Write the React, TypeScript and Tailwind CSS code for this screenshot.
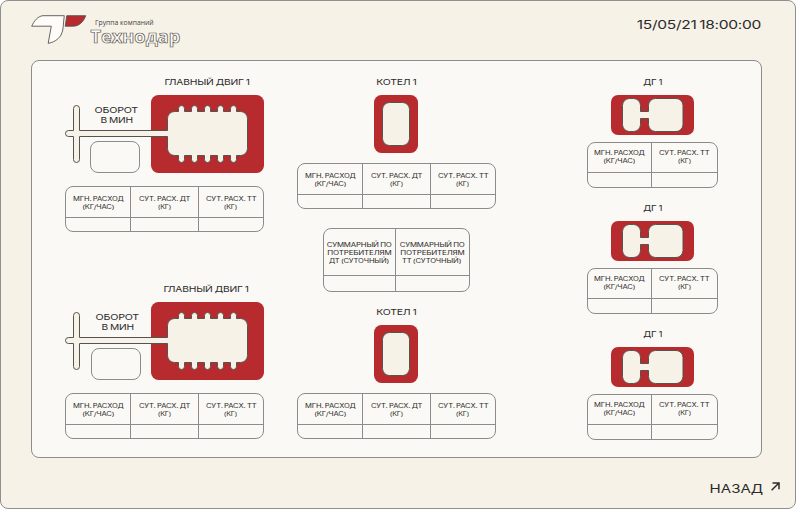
import { useLayoutEffect, useRef, useState } from "react";
import clsx from "clsx";

/** One line of extended-width lettering, stretched to the given width. */
function Wide({ w, className, children }: { w: number; className?: string; children: string }) {
  const ref = useRef<HTMLSpanElement>(null);
  const [scale, setScale] = useState(1);
  useLayoutEffect(() => {
    if (ref.current) setScale(w / ref.current.offsetWidth);
  }, [w, children]);
  return (
    <span className={clsx("flex justify-center", className)} style={{ width: w }}>
      <span ref={ref} className="shrink-0 whitespace-nowrap" style={{ transform: `scaleX(${scale})` }}>
        {children}
      </span>
    </span>
  );
}

type Line = [string, number];

const FLOW: Line[] = [["МГН. РАСХОД", 51], ["(КГ/ЧАС)", 31.5]];
const DAY_DT: Line[] = [["СУТ. РАСХ. ДТ", 51], ["(КГ)", 13.5]];
const DAY_TT: Line[] = [["СУТ. РАСХ. ТТ", 50], ["(КГ)", 13.5]];
const SUM_DT: Line[] = [["СУММАРНЫЙ ПО", 64.5], ["ПОТРЕБИТЕЛЯМ", 64.5], ["ДТ (СУТОЧНЫЙ)", 60]];
const SUM_TT: Line[] = [["СУММАРНЫЙ ПО", 64.5], ["ПОТРЕБИТЕЛЯМ", 64.5], ["ТТ (СУТОЧНЫЙ)", 59]];

function Table({ cells, className, head }: { cells: Line[][]; className: string; head: string }) {
  return (
    <div className={clsx("grid shrink-0 overflow-hidden rounded-lg border border-[#8c8c8c]", className)}>
      {cells.map((lines, i) => (
        <div key={i} className={clsx("flex flex-col", i > 0 && "border-l border-[#8c8c8c]")}>
          <div
            className={clsx(
              "flex flex-col items-center border-b border-[#8c8c8c] text-[5.8px] leading-[8px] tracking-[-0.02em] [word-spacing:-0.08em]",
              head,
            )}
          >
            {lines.map(([text, w]) => (
              <Wide key={text} w={w}>
                {text}
              </Wide>
            ))}
          </div>
        </div>
      ))}
    </div>
  );
}

function Title({ w, children }: { w: number; children: string }) {
  return (
    <h2 className="mb-[3px] flex h-5 items-center justify-center text-[8px] tracking-[-0.02em] [word-spacing:-0.06em]">
      <Wide w={w}>{children}</Wide>
    </h2>
  );
}

const ENGINE =
  "M102.5 35.5H14.5V13.5a3 3 0 0 0-6 0V35.5H3.5a3 3 0 0 0 0 6H8.5V64.5a3 3 0 0 0 6 0V41.5H102.5V53.5a7 7 0 0 0 7 7H113.5" +
  "v4a3 3 0 0 0 6 0v-4h7v4a3 3 0 0 0 6 0v-4h7v4a3 3 0 0 0 6 0v-4h7v4a3 3 0 0 0 6 0v-4h7v4a3 3 0 0 0 6 0v-4" +
  "h4a7 7 0 0 0 7-7V23.5a7 7 0 0 0-7-7h-4" +
  "v-3a3 3 0 0 0-6 0v3h-7v-3a3 3 0 0 0-6 0v3h-7v-3a3 3 0 0 0-6 0v3h-7v-3a3 3 0 0 0-6 0v3h-7v-3a3 3 0 0 0-6 0v3" +
  "h-4a7 7 0 0 0-7 7z";

function MainEngine({ second = false }: { second?: boolean }) {
  return (
    <section className="w-[199px]">
      <div className={clsx(second ? "pl-[84px]" : "pl-[86px]")}>
        <Title w={85}>ГЛАВНЫЙ ДВИГ 1</Title>
      </div>
      <div className="relative h-[78px]">
        <svg className="block" width="199" height="78" viewBox="0 0 199 78">
          <rect x="86" width="113" height="78" rx="7.5" fill="#b72a2d" />
          <path d={ENGINE} fill="#f7f2e7" stroke="#57534e" />
        </svg>
        <div
          className={clsx(
            "absolute top-[10px] flex w-[50px] flex-col items-center text-[8px] leading-[10px] tracking-[-0.02em] [word-spacing:-0.06em]",
            second ? "left-[26px]" : "left-[25px]",
          )}
        >
          <Wide w={44} className="ml-[3px]">ОБОРОТ</Wide>
          <Wide w={32} className="ml-[3px]">В МИН</Wide>
          <div className="mt-[16px] h-8 w-[50px] rounded-lg border border-[#8c8c8c]" />
        </div>
      </div>
      <Table
        cells={[FLOW, DAY_DT, DAY_TT]}
        className="mt-[13px] h-[46px] grid-cols-[64px_68px_65px]"
        head="h-[31px] pt-[8px]"
      />
    </section>
  );
}

function Boiler() {
  return (
    <section className="flex w-[199px] flex-col items-center">
      <Title w={40.5}>КОТЕЛ 1</Title>
      <svg className="mr-px block" width="44" height="58" viewBox="0 0 44 58">
        <rect width="44" height="58" rx="7.5" fill="#b72a2d" />
        <rect x="8.5" y="7.5" width="27" height="43" rx="7" fill="#f7f2e7" stroke="#57534e" />
      </svg>
      <Table
        cells={[FLOW, DAY_DT, DAY_TT]}
        className="mt-[10px] h-[46px] w-full grid-cols-[64px_68px_65px]"
        head="h-[31px] pt-[8px]"
      />
    </section>
  );
}

function Generator() {
  return (
    <section className="flex w-[131px] flex-col items-center">
      <Title w={19.5}>ДГ 1</Title>
      <svg className="block" width="83" height="40" viewBox="0 0 83 40">
        <rect width="83" height="40" rx="7" fill="#b72a2d" />
        <path
          d="M18.5 3.5h4a7 7 0 0 1 7 7v6h8v-6a7 7 0 0 1 7-7h20.500a7 7 0 0 1 7 7v19a7 7 0 0 1-7 7h-20.500a7 7 0 0 1-7-7v-6h-8v6a7 7 0 0 1-7 7h-4a7 7 0 0 1-7-7v-19a7 7 0 0 1 7-7z"
          fill="#f7f2e7"
          stroke="#57534e"
        />
      </svg>
      <Table
        cells={[FLOW, DAY_TT]}
        className="mt-[7px] h-[46px] w-full grid-cols-[63px_66px]"
        head="h-[30px] pt-[6px]"
      />
    </section>
  );
}

function Logo() {
  return (
    <div className="flex">
      <svg className="block" width="58" height="30" viewBox="0 0 58 30">
        <path
          d="M.7 11.200C3 6 7 1 12 .7H33.300C32 8 33 15 30 20C27 25 22 27.500 17.200 28.300L20.300 11.200Z"
          fill="#fdfcf9"
          stroke="#57534e"
          strokeWidth=".9"
        />
        <path d="M35.800 .7H54.700C52.500 7 48 11 42.500 11.200H34.200Z" fill="#b72a2d" stroke="#57534e" strokeWidth=".9" />
      </svg>
      <div className="flex flex-col pt-[3px] font-['Open_Sans',sans-serif] text-[#3f3f3f]">
        <Wide w={59} className="ml-[6px] text-[7.5px] leading-[8px] font-medium">
          Группа компаний
        </Wide>
        <Wide
          w={90}
          className="ml-px text-[18px] leading-[20px] font-bold text-[#fdfcf9] [-webkit-text-stroke:0.7px_#57534e]"
        >
          Технодар
        </Wide>
      </div>
    </div>
  );
}

export default function App() {
  return (
    <main className="h-[509px] w-[796px] bg-white font-[Inter,sans-serif] text-[#2b2b2b]">
      <div className="flex h-full flex-col rounded-lg border border-[#8f8f8f] bg-[#f7f2e7]">
        <header className="flex h-[59px] shrink-0 items-start justify-between pt-[14px] pr-[34px] pl-[30px]">
          <Logo />
          <Wide w={124.5} className="text-[12px] leading-[20px] tracking-[-0.02em] [word-spacing:-0.08em]">
            15/05/21 18:00:00
          </Wide>
        </header>
        <div className="ml-[30px] flex h-[398px] w-[731px] shrink-0 rounded-lg border border-[#8c8c8c] bg-[#fbf9f5] pt-[11px] pl-[33px]">
          <div className="flex flex-col gap-[47px]">
            <MainEngine />
            <MainEngine second />
          </div>
          <div className="ml-[33px] flex flex-col items-center">
            <Boiler />
            <Table
              cells={[SUM_DT, SUM_TT]}
              className="mt-[19px] mb-[10px] h-[64px] grid-cols-[71px_74px]"
              head="h-[47px] pt-[12px] pr-px"
            />
            <Boiler />
          </div>
          <div className="ml-[91px] flex flex-col gap-[10px]">
            <Generator />
            <Generator />
            <Generator />
          </div>
        </div>
        <footer className="flex flex-1 items-start justify-end gap-[8px] pt-[21px] pr-[15px]">
          <Wide w={54} className="text-[12px] leading-[20px]">
            НАЗАД
          </Wide>
          <svg className="mt-[3px] block" width="9" height="9" viewBox="0 0 9 9" fill="none" stroke="#2b2b2b" strokeWidth="1.5">
            <path d="M.6 8.200L7.700 1.200M1.500 1H8V7.300" />
          </svg>
        </footer>
      </div>
    </main>
  );
}
